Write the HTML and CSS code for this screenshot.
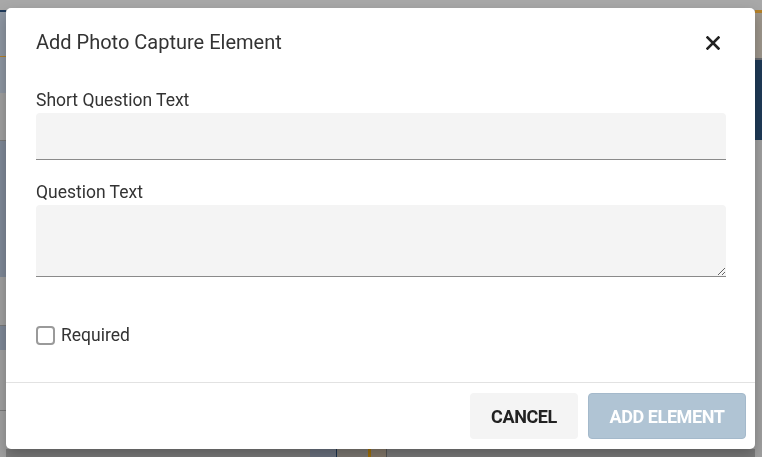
FILE: index.html
```html
<!DOCTYPE html>
<html lang="en">
<head>
<meta charset="utf-8">
<title>Add Photo Capture Element</title>
<link rel="stylesheet" href="styles.css">
</head>
<body>
<div class="page">
  <div class="side side-left">
    <div class="b b-top"></div>
    <div class="b b-navy-line"></div>
    <div class="b b-bluegray h44"></div>
    <div class="b b-orange-line"></div>
    <div class="b b-bluegray h36"></div>
    <div class="b b-gray h47"></div>
    <div class="b b-line"></div>
    <div class="b b-slate h136"></div>
    <div class="b b-gray h48"></div>
    <div class="b b-line"></div>
    <div class="b b-slate h24"></div>
    <div class="b b-gray h60"></div>
    <div class="b b-line"></div>
    <div class="b b-gray fill"></div>
  </div>
  <div class="center">
    <div class="b b-top"></div>
    <div class="center-fill"></div>
    <div class="bottom-strip">
      <div class="bs bs-gray w30"></div>
      <div class="bs bs-slate w26"></div>
      <div class="bs bs-navy"></div>
      <div class="bs bs-tan w31"></div>
      <div class="bs bs-orange"></div>
      <div class="bs bs-tan2 w15"></div>
      <div class="bs bs-dark"></div>
      <div class="bs bs-gray fill"></div>
    </div>
  </div>
  <div class="side side-right">
    <div class="b b-top"></div>
    <div class="b b-orange-line h3"></div>
    <div class="b b-tan h45"></div>
    <div class="b b-line2"></div>
    <div class="b b-navy h80"></div>
    <div class="b b-gray fill"></div>
  </div>
</div>

<div class="overlay">
  <div class="modal" role="dialog" aria-labelledby="dlg-title">
    <div class="modal-header">
      <h2 id="dlg-title" class="modal-title">Add Photo Capture Element</h2>
      <button class="close-btn" aria-label="Close">
        <svg width="14" height="14" viewBox="0 0 14 14" aria-hidden="true">
          <path d="M1.5 1.5 L12.5 12.5 M12.5 1.5 L1.5 12.5" stroke="#222" stroke-width="2.6" stroke-linecap="square" fill="none"/>
        </svg>
      </button>
    </div>
    <div class="modal-body">
      <label class="field-label" for="short-q">Short Question Text</label>
      <input id="short-q" class="text-input" type="text">
      <label class="field-label second" for="q-text">Question Text</label>
      <textarea id="q-text" class="text-area"></textarea>
      <label class="check-row">
        <span class="check-box"></span>
        <span class="check-text">Required</span>
      </label>
    </div>
    <div class="modal-footer">
      <button class="btn btn-cancel">CANCEL</button>
      <button class="btn btn-primary" disabled>ADD ELEMENT</button>
    </div>
  </div>
</div>
</body>
</html>
```

FILE: styles.css
```css
* { box-sizing: border-box; }
html, body { margin: 0; padding: 0; }
body {
  width: 762px;
  height: 457px;
  overflow: hidden;
  font-family: Roboto, "Liberation Sans", Arial, sans-serif;
  background: #a3a3a3;
}

/* background page (already dimmed) */
.page {
  display: flex;
  width: 762px;
  height: 457px;
}
.side { display: flex; flex-direction: column; }
.side-left { width: 6px; }
.side-right { width: 7px; }
.center { flex: 1; display: flex; flex-direction: column; }
.center-fill { flex: 1; background: #a0a0a0; }
.b { flex: none; }
.b.fill { flex: 1; }
.b-top { height: 10px; background: #a8a8a8; }
.b-navy-line { height: 2px; background: #1f3a5a; }
.b-bluegray { background: #8e97a3; }
.b-orange-line { height: 1px; background: #b3802a; }
.b-gray { background: #a0a0a0; }
.b-line { height: 1px; background: #7a7a7a; }
.b-line2 { height: 2px; background: #6a6d72; }
.b-slate { background: #7f8998; }
.b-tan { background: #9d968c; }
.b-navy { background: #1f3a57; }
.h3 { height: 3px; }
.h24 { height: 24px; }
.h36 { height: 36px; }
.h44 { height: 44px; }
.h45 { height: 45px; }
.h47 { height: 47px; }
.h48 { height: 48px; }
.h60 { height: 60px; }
.h80 { height: 80px; }
.h136 { height: 136px; }

.bottom-strip { display: flex; height: 8px; padding-left: 274px; background: #7b7b7b; }
.bs { flex: none; height: 8px; }
.bs.fill { flex: 1; }
.bs-gray { background: #7b7b7b; }
.bs-slate { background: #6c7380; }
.bs-navy { width: 1px; background: #1c3350; }
.bs-tan { background: #7e7a74; }
.bs-orange { width: 3px; background: #a0700a; }
.bs-tan2 { background: #857a6c; }
.bs-dark { width: 1px; background: #555; }
.w15 { width: 15px; }
.w26 { width: 26px; }
.w30 { width: 30px; }
.w31 { width: 31px; }

/* overlay + dialog */
.overlay {
  position: fixed;
  inset: 0;
  display: flex;
  padding: 8px 7px 8px 6px;
}
.modal {
  flex: 1;
  display: flex;
  flex-direction: column;
  background: #fff;
  border-radius: 5px;
  box-shadow: 0 6px 14px rgba(0,0,0,0.25);
}
.modal-header {
  display: flex;
  align-items: center;
  justify-content: space-between;
  padding: 23px 34px 0 30px;
}
.modal-title {
  margin: 0;
  font-size: 20px;
  line-height: 23px;
  font-weight: 400;
  color: #333;
}
.close-btn {
  display: flex;
  align-items: center;
  justify-content: center;
  width: 16px;
  height: 16px;
  padding: 0;
  border: none;
  background: none;
  cursor: pointer;
}
.modal-body {
  display: flex;
  flex-direction: column;
  padding: 36px 29px 0 30px;
  flex: 1;
}
.field-label {
  font-size: 17.5px;
  line-height: 20px;
  color: #333;
  margin-bottom: 3px;
}
.field-label.second { margin-top: 22px; }
.text-input, .text-area {
  display: block;
  width: 100%;
  border: none;
  border-bottom: 1px solid #8a8a8a;
  border-radius: 4px 4px 0 0;
  background: #f4f4f4;
  font: inherit;
  outline: none;
}
.text-input { height: 47px; }
.text-area { height: 72px; resize: vertical; }
.check-row {
  display: flex;
  align-items: center;
  gap: 6px;
  margin-top: 48px;
  cursor: pointer;
}
.check-box {
  width: 19px;
  height: 19px;
  border: 2px solid #9a9a9a;
  border-radius: 4px;
  background: #fff;
}
.check-text {
  font-size: 17.5px;
  line-height: 20px;
  color: #333;
}
.modal-footer {
  display: flex;
  justify-content: flex-end;
  gap: 10px;
  padding: 10px 9px 10px 9px;
  border-top: 1px solid #e2e2e2;
}
.btn {
  height: 46px;
  padding: 0;
  border-radius: 4px;
  font-family: Roboto, "Liberation Sans", Arial, sans-serif;
  font-size: 18px;
  font-weight: 700;
  letter-spacing: -0.4px;
}
.btn-cancel {
  width: 108px;
  border: none;
  background: #f4f4f4;
  color: #222;
}
.btn-primary {
  width: 158px;
  border: 1px solid #a4b9cb;
  background: #b0c4d4;
  color: #fff;
}
```
